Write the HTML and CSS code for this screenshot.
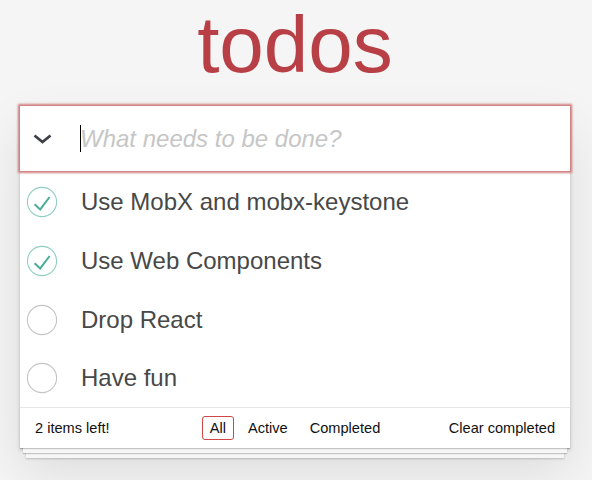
FILE: index.html
```html
<!DOCTYPE html>
<html lang="en">
<head>
<meta charset="utf-8">
<title>todos</title>
<link rel="stylesheet" href="styles.css">
</head>
<body>
<div class="page">
  <h1 class="title">todos</h1>
  <section class="app">
    <header class="header">
      <input class="new-todo is-focused" placeholder="What needs to be done?">
      <span class="caret"></span>
      <span class="toggle-all">
        <svg width="19" height="10" viewBox="0 0 19 10"><polyline points="1.5,1.5 9.5,8 17.5,1.5" fill="none" stroke="#3f4048" stroke-width="2.8" stroke-linejoin="miter"/></svg>
      </span>
    </header>
    <ul class="list">
      <li class="item">
        <svg class="toggle" width="32" height="32" viewBox="0 0 32 32"><circle cx="16" cy="16" r="14.6" fill="none" stroke="#8fcfc1" stroke-width="1.1"/><polyline points="8.6,18.2 14.2,23.4 23.6,11" fill="none" stroke="#4aae97" stroke-width="2"/></svg>
        <span class="label">Use MobX and mobx-keystone</span>
      </li>
      <li class="item">
        <svg class="toggle" width="32" height="32" viewBox="0 0 32 32"><circle cx="16" cy="16" r="14.6" fill="none" stroke="#8fcfc1" stroke-width="1.1"/><polyline points="8.6,18.2 14.2,23.4 23.6,11" fill="none" stroke="#4aae97" stroke-width="2"/></svg>
        <span class="label">Use Web Components</span>
      </li>
      <li class="item">
        <svg class="toggle" width="32" height="32" viewBox="0 0 32 32"><circle cx="16" cy="16" r="14.6" fill="none" stroke="#c4c4c4" stroke-width="1.1"/></svg>
        <span class="label">Drop React</span>
      </li>
      <li class="item">
        <svg class="toggle" width="32" height="32" viewBox="0 0 32 32"><circle cx="16" cy="16" r="14.6" fill="none" stroke="#c4c4c4" stroke-width="1.1"/></svg>
        <span class="label">Have fun</span>
      </li>
    </ul>
    <footer class="footer">
      <span class="count">2 items left!</span>
      <ul class="filters">
        <li><a class="filter selected">All</a></li>
        <li><a class="filter">Active</a></li>
        <li><a class="filter">Completed</a></li>
      </ul>
      <span class="clear">Clear completed</span>
    </footer>
  </section>
</div>
</body>
</html>
```
FILE: styles.css
```css
html, body {
  margin: 0;
  padding: 0;
}
html {
  background: #f5f5f5;
}
body {
  min-height: 100vh;
  background: #f5f5f5;
  font-family: "Liberation Sans", Arial, Helvetica, sans-serif;
  color: #4d4d4d;
  -webkit-font-smoothing: antialiased;
}
.page {
  width: 550px;
  margin: 0 0 0 20px;
  padding-bottom: 40px;
}
.title {
  margin: 0 0 16px 0;
  font-size: 80px;
  line-height: 90px;
  font-weight: 200;
  color: #b83f45;
  text-align: center;
}
.app {
  background: #fff;
  position: relative;
  box-shadow: 0 2px 4px 0 rgba(0, 0, 0, 0.2), 0 25px 50px 0 rgba(0, 0, 0, 0.1);
}
.header {
  position: relative;
}
.new-todo {
  display: block;
  box-sizing: border-box;
  width: 100%;
  height: 65px;
  margin: 0;
  padding: 16px 16px 16px 60px;
  border: none;
  font-family: inherit;
  font-size: 24px;
  line-height: 1.4em;
  color: #4d4d4d;
  background: #fff;
  outline: none;
}
.new-todo::placeholder {
  font-style: italic;
  color: #c6c6c6;
}
.new-todo.is-focused {
  box-shadow: 0 0 2px 2px #cf7d7d;
}
.caret {
  position: absolute;
  left: 60px;
  top: 19px;
  width: 1px;
  height: 27px;
  background: #000;
}
.toggle-all {
  position: absolute;
  left: 13px;
  top: 28px;
  width: 19px;
  height: 10px;
  display: flex;
}
.list {
  list-style: none;
  margin: 0;
  padding: 1px 0 0 0;
}
.item {
  display: flex;
  align-items: center;
  height: 59px;
  padding-left: 6px;
}
.item:last-child {
  height: 58px;
}
.toggle {
  flex: none;
  margin-right: 23px;
}
.label {
  font-size: 24px;
  line-height: 28px;
  color: #484848;
}
.footer {
  display: grid;
  grid-template-columns: 1fr auto 1fr;
  align-items: center;
  height: 20px;
  padding: 10px 15px;
  border-top: 1px solid #e6e6e6;
  font-size: 14.6px;
  line-height: 20px;
  color: #111;
  box-shadow: 0 1px 1px rgba(0, 0, 0, 0.2),
              0 8px 0 -3px #f6f6f6,
              0 9px 1px -3px rgba(0, 0, 0, 0.2),
              0 16px 0 -6px #f6f6f6,
              0 17px 2px -6px rgba(0, 0, 0, 0.2);
}
.count {
  justify-self: start;
}
.filters {
  display: flex;
  list-style: none;
  margin: 0;
  padding: 0;
}
.filter {
  margin: 3px;
  padding: 3px 7px;
  border: 1px solid transparent;
  border-radius: 3px;
  color: inherit;
}
.filter.selected {
  border-color: #ce4646;
}
.clear {
  justify-self: end;
}
```
